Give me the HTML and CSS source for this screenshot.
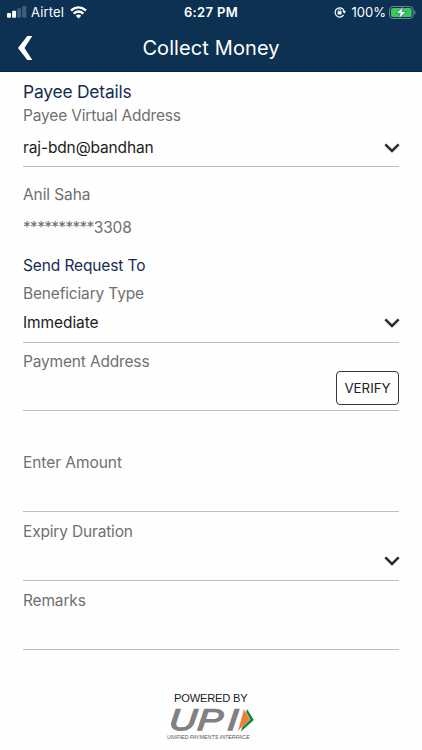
FILE: index.html
```html
<!DOCTYPE html>
<html lang="en">
<head>
<meta charset="utf-8">
<title>Collect Money</title>
<link rel="stylesheet" href="styles.css">
</head>
<body>
<header class="header">
  <div class="status">
    <div class="status-left">
      <svg class="signal" width="20" height="12" viewBox="0 0 20 12"><g fill="#fff"><rect x="0" y="7" width="4" height="4.7" rx="1"/><rect x="5.1" y="4.8" width="4" height="6.9" rx="1"/><g opacity=".22"><rect x="10.2" y="2.3" width="4" height="9.4" rx="1"/><rect x="15.3" y="0" width="4" height="11.7" rx="1"/></g></g></svg>
      <span class="carrier">Airtel</span>
      <svg class="wifi" width="17" height="13" viewBox="0 0 17 13"><g fill="none" stroke="#fff" stroke-width="2.3"><path d="M1 4.5Q8.5-1.8 16 4.5M3.6 7.6Q8.5 3.3 13.4 7.6"/></g><path d="M5.8 9.7Q8.5 7.4 11.2 9.7L8.5 12.5Z" fill="#fff"/></svg>
    </div>
    <div class="clock">6:27 PM</div>
    <div class="status-right">
      <svg class="lock" width="12" height="12" viewBox="0 0 12 12"><path d="M9.6 8.9A4.6 4.6 0 1 1 10.1 5.1" fill="none" stroke="#fff" stroke-width="1.2"/><path d="M8.4 5H12L10.3 7.7Z" fill="#fff"/><rect x="3.6" y="5.3" width="4" height="3.2" rx=".4" fill="#fff"/><path d="M4.4 5.4V4.5A1.2 1.2 0 0 1 6.8 4.5V5.4" fill="none" stroke="#fff" stroke-width=".8"/></svg>
      <span class="percent">100%</span>
      <svg class="battery" width="27" height="13" viewBox="0 0 27 13"><rect x=".5" y=".5" width="23.7" height="12" rx="3.5" fill="none" stroke="#6d8396"/><rect x="2" y="2" width="20.7" height="9" rx="2.1" fill="#35cb5c"/><path d="M25.3 4.3Q26.6 4.8 26.6 6.5T25.3 8.7Z" fill="#6d8396"/><path d="M14.4.5L7.2 7.2H11.3L9.9 12.5L17.4 5.6H12.9Z" fill="#fff" stroke="#12384f" stroke-width=".5"/></svg>
    </div>
  </div>
  <div class="navbar">
    <svg class="back" width="15" height="24" viewBox="0 0 15 24"><path d="M9.3 0H14.3L6.5 12L14.3 24H9.3L0 12Z" fill="#fff"/></svg>
    <h1 class="title">Collect Money</h1>
  </div>
</header>
<main class="form">
  <h2 class="heading heading-payee">Payee Details</h2>
  <section class="field payee">
    <div class="label">Payee Virtual Address</div>
    <div class="value"><span class="payee-value">raj-bdn@bandhan</span><svg class="chevron" width="16" height="10" viewBox="0 0 16 10"><path d="M1.3 1.3L8 7.9L14.7 1.3"/></svg></div>
  </section>
  <div class="account"><div class="name">Anil Saha</div><div class="number"><span class="mask">**********</span>3308</div></div>
  <h2 class="heading heading-send">Send Request To</h2>
  <section class="field beneficiary">
    <div class="label">Beneficiary Type</div>
    <div class="value"><span>Immediate</span><svg class="chevron" width="16" height="10" viewBox="0 0 16 10"><path d="M1.3 1.3L8 7.9L14.7 1.3"/></svg></div>
  </section>
  <section class="field payment">
    <div class="label">Payment Address</div>
    <button class="verify">VERIFY</button>
  </section>
  <section class="field amount"><div class="label amount-label">Enter Amount</div></section>
  <section class="field expiry">
    <div class="label">Expiry Duration</div>
    <div class="value value-end"><svg class="chevron" width="16" height="10" viewBox="0 0 16 10"><path d="M1.3 1.3L8 7.9L14.7 1.3"/></svg></div>
  </section>
  <section class="field remarks"><div class="label">Remarks</div></section>
</main>
<footer class="footer">
  <div class="powered">POWERED BY</div>
  <svg class="upi" width="92" height="36" viewBox="0 0 92 36">
    <path d="M82 3L88.8 14L76 25.5Z" fill="#168344"/>
    <path d="M79 2.5L85 13.5L72.5 25.5Z" fill="#f07d32" stroke="#fefefe" stroke-width=".5"/>
    <g transform="translate(3.4 24.2) skewX(-5) scale(1.27 1)"><text class="upi-name" x="0 22.4 46" y="0">UPI</text></g>
    <text class="upi-caption" x="2" y="33" textLength="82.5" lengthAdjust="spacingAndGlyphs">UNIFIED PAYMENTS INTERFACE</text>
  </svg>
</footer>
</body>
</html>
```
FILE: styles.css
```css
* { box-sizing: border-box; }
body {
  margin: 0;
  width: 422px;
  height: 750px;
  overflow: hidden;
  background: #fefefe;
  font-family: Inter, "Liberation Sans", sans-serif;
  font-size: 15.5px;
  line-height: 20px;
  letter-spacing: -.09px;
  color: #1b1b1b;
  white-space: nowrap;
}
svg { display: block; flex: none; }
.header { height: 72px; background: #0c3152; color: #fff; border-bottom: 1px solid #082641; }
.status { height: 24px; display: grid; grid-template-columns: 1fr auto 1fr; align-items: center; font-size: 13px; }
.status-left { display: flex; align-items: center; padding-left: 7px; }
.carrier { margin-left: 4px; width: 33px; letter-spacing: .15px; }
.wifi { margin-left: 6px; }
.clock { font-weight: 600; letter-spacing: .35px; }
.status-right { display: flex; align-items: center; justify-content: flex-end; padding-right: 6px; }
.percent { margin: 0 3px 0 6px; letter-spacing: 0; }
.navbar { height: 47px; display: grid; grid-template-columns: 120px 182px 120px; align-items: center; }
.back { margin-left: 18px; }
.title { margin: 0; text-align: center; font-size: 20px; line-height: 26px; font-weight: 400; letter-spacing: .1px; }
.form { padding: 10px 23px 0; }
.heading { margin: 0; color: #162c50; font-weight: 400; }
.heading-payee { height: 24px; font-size: 17.4px; letter-spacing: -.2px; }
.heading-send { height: 27px; font-size: 15.5px; letter-spacing: -.12px; }
.field { display: flex; flex-direction: column; justify-content: space-between; border-bottom: 1px solid #b9bfc9; }
.label, .account { color: #707070; }
.label { letter-spacing: -.17px; }
.value { display: flex; justify-content: space-between; align-items: center; }
.value-end { justify-content: flex-end; }
.chevron { margin: 0 -1px 1px 0; }
.chevron path { fill: none; stroke: #292a2d; stroke-width: 2.5; }
.payee { height: 61px; padding-bottom: 8px; }
.payee-value { letter-spacing: -.13px; }
.mask { letter-spacing: -.7px; }
.account { height: 89px; padding-top: 18px; display: flex; flex-direction: column; gap: 13px; }
.beneficiary { height: 60px; padding: 1px 0 9px; }
.payment { height: 68px; padding-top: 9px; position: relative; }
.verify { position: absolute; right: 0; top: 28px; width: 63px; height: 34px; padding: 0; border: 1px solid #303743; border-radius: 4px; background: #fefefe; color: #222; font: 400 13.3px/20px Inter, sans-serif; }
.amount { height: 101px; padding-top: 42px; }
.amount-label { letter-spacing: -.05px; }
.expiry { height: 69px; padding: 10px 0 13px; }
.remarks { height: 69px; padding-top: 10px; }
.footer { margin-top: 41px; padding-left: 165px; }
.powered { font: 400 11.2px/15px "Liberation Sans", sans-serif; letter-spacing: -.25px; padding-left: 9px; }
.upi { overflow: visible; }
.upi-name { font: italic 30px "Liberation Sans", sans-serif; letter-spacing: 0; fill: #808184; stroke: #808184; stroke-width: 1.3; }
.upi-caption { font: italic 5.7px "Liberation Sans", sans-serif; letter-spacing: 0; fill: #555; }
```
